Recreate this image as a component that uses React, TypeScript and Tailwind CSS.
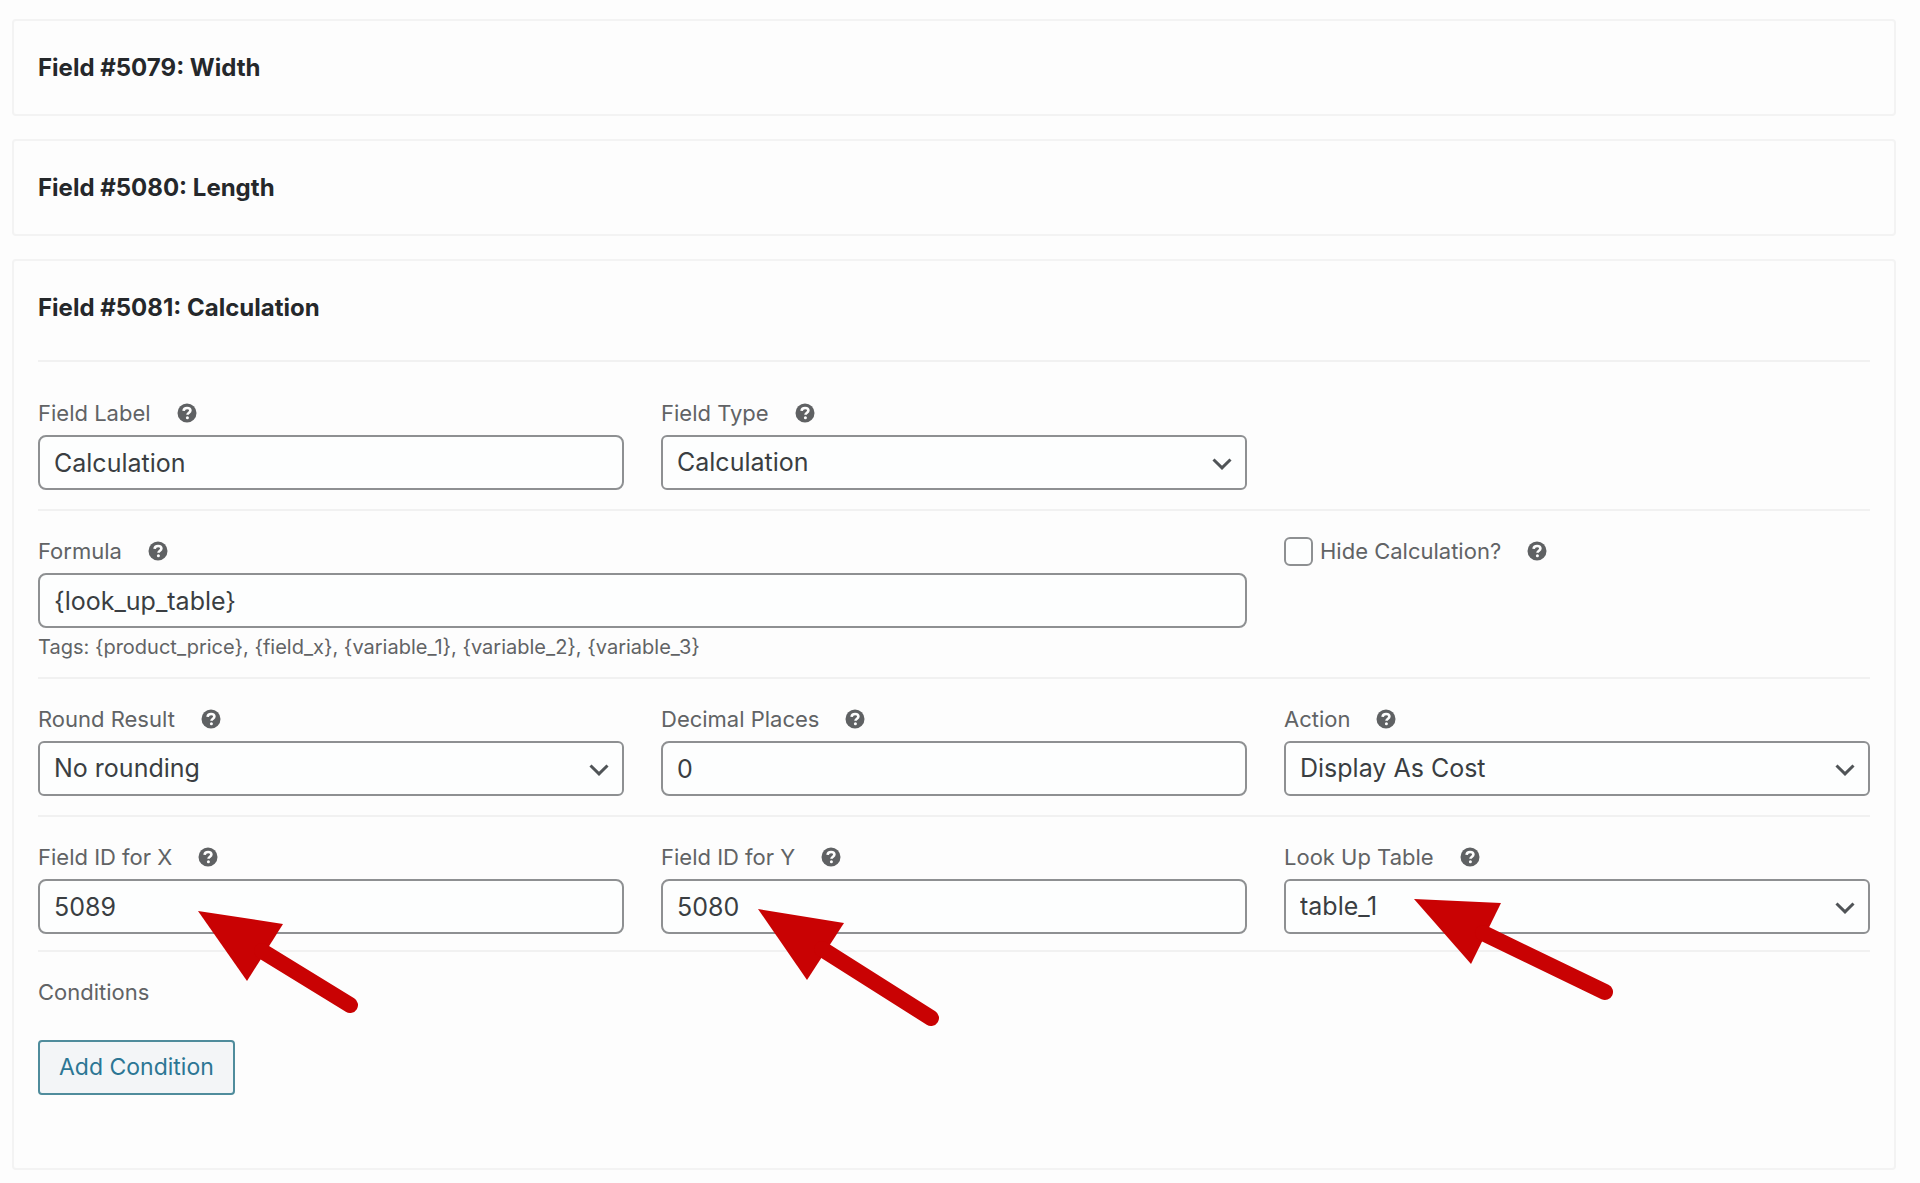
import React, { useId, useState } from "react";

const controlClass =
  "block h-[55px] w-full appearance-none border-2 border-[#8e9092] bg-[#fdfefe] px-3.5 text-[25px] text-[#3a3e42] outline-none";

function HelpIcon() {
  return (
    <svg viewBox="0 0 20 20" className="ml-[26px] size-5 shrink-0" aria-hidden="true">
      <circle cx="10" cy="10" r="9.5" fill="#5f6163" />
      <path
        d="M6.600 7.900C6.700 6 8.100 5 10.100 5c2 0 3.300 1 3.300 2.600 0 2.200-2.900 2-2.900 4.200"
        fill="none"
        stroke="#fdfdfd"
        strokeWidth="2.600"
      />
      <circle cx="10.400" cy="14.800" r="1.500" fill="#fdfdfd" />
    </svg>
  );
}

function FieldLabel({ htmlFor, children }: { htmlFor: string; children: React.ReactNode }) {
  return (
    <div className="mb-2 flex h-7 items-center">
      <label htmlFor={htmlFor} className="text-[22px] leading-7 text-[#616365]">
        {children}
      </label>
      <HelpIcon />
    </div>
  );
}

function TextField({
  label,
  initial,
  children,
}: {
  label: string;
  initial: string;
  children?: React.ReactNode;
}) {
  const id = useId();
  const [value, setValue] = useState(initial);
  return (
    <div>
      <FieldLabel htmlFor={id}>{label}</FieldLabel>
      <div className="relative">
        <input
          id={id}
          type="text"
          value={value}
          onChange={(e) => setValue(e.target.value)}
          className={`${controlClass} rounded-lg`}
        />
        {children}
      </div>
    </div>
  );
}

function SelectField({
  label,
  value,
  children,
}: {
  label: string;
  value: string;
  children?: React.ReactNode;
}) {
  const id = useId();
  return (
    <div>
      <FieldLabel htmlFor={id}>{label}</FieldLabel>
      <div className="relative">
        <select id={id} defaultValue={value} className={`${controlClass} rounded-md`}>
          <option value={value}>{value}</option>
        </select>
        <svg
          viewBox="0 0 20 12"
          className="pointer-events-none absolute top-[23px] right-[15px] h-3 w-5"
          aria-hidden="true"
        >
          <path d="M1.500 1.500 10 9.800l8.500-8.300" fill="none" stroke="#505457" strokeWidth="3" />
        </svg>
        {children}
      </div>
    </div>
  );
}

function Card({ title, children }: { title: string; children?: React.ReactNode }) {
  return (
    <section className="rounded border-2 border-[#f3f3f3] px-6">
      <h3 className="py-8 text-2xl leading-[29px] font-bold text-[#25282b]">{title}</h3>
      {children}
    </section>
  );
}

function Row({ className, children }: { className: string; children: React.ReactNode }) {
  return (
    <div className={`grid grid-cols-3 gap-x-[37px] border-b-2 border-[#f1f1f1] ${className}`}>
      {children}
    </div>
  );
}

export default function App() {
  return (
    <main className="flex min-h-screen flex-col gap-[23px] bg-[#fdfdfd] pt-[19px] pr-6 pb-3 pl-3 font-['Inter',sans-serif]">
      <Card title="Field #5079: Width" />
      <Card title="Field #5080: Length" />
      <Card title="Field #5081: Calculation">
        <div className="mt-1.5 border-t-2 border-[#f1f1f1] pb-[73px]">
          <Row className="pt-[37px] pb-[19px]">
            <TextField label="Field Label" initial="Calculation" />
            <SelectField label="Field Type" value="Calculation" />
          </Row>

          <Row className="pt-[26px] pb-4">
            <div className="col-span-2">
              <TextField label="Formula" initial="{look_up_table}" />
              <p className="mt-[5px] text-[20px] leading-7 text-[#616365]">
                Tags: {"{product_price}, {field_x}, {variable_1}, {variable_2}, {variable_3}"}
              </p>
            </div>
            <div className="flex h-7 items-center">
              <input
                id="hide-calculation"
                type="checkbox"
                className="size-[29px] shrink-0 appearance-none rounded-md border-2 border-[#8e9092] bg-[#fdfefe] checked:bg-[#2c7694]"
              />
              <label
                htmlFor="hide-calculation"
                className="ml-[7px] text-[22px] leading-7 text-[#616365]"
              >
                Hide Calculation?
              </label>
              <HelpIcon />
            </div>
          </Row>

          <Row className="pt-[26px] pb-[19px]">
            <SelectField label="Round Result" value="No rounding" />
            <TextField label="Decimal Places" initial="0" />
            <SelectField label="Action" value="Display As Cost" />
          </Row>

          <Row className="pt-[26px] pb-4">
            <TextField label="Field ID for X" initial="5089">
              <svg
                viewBox="198 911 162 104"
                className="pointer-events-none absolute top-8 left-40 z-10 h-[104px] w-[162px]"
                aria-hidden="true"
              >
                <path d="M198 911 283 924 247 981Z" fill="#c90203" />
                <path d="M262 951 350 1005" stroke="#c90203" strokeWidth="16" strokeLinecap="round" />
              </svg>
            </TextField>
            <TextField label="Field ID for Y" initial="5080">
              <svg
                viewBox="758 909 182 118"
                className="pointer-events-none absolute top-[30px] left-[97px] z-10 h-[118px] w-[182px]"
                aria-hidden="true"
              >
                <path d="M758 909 844 923 807 980Z" fill="#c90203" />
                <path d="M822 949 931 1018" stroke="#c90203" strokeWidth="16" strokeLinecap="round" />
              </svg>
            </TextField>
            <SelectField label="Look Up Table" value="table_1">
              <svg
                viewBox="1414 899 200 102"
                className="pointer-events-none absolute top-5 left-[130px] z-10 h-[102px] w-[200px]"
                aria-hidden="true"
              >
                <path d="M1414 899 1501 903 1471 964Z" fill="#c90203" />
                <path d="M1483 933 1605 992" stroke="#c90203" strokeWidth="16" strokeLinecap="round" />
              </svg>
            </SelectField>
          </Row>

          <h4 className="pt-[26px] text-[22px] leading-7 text-[#616365]">Conditions</h4>
          <button
            type="button"
            className="mt-[34px] h-[55px] rounded border-2 border-[#4f8c9c] bg-[#f3f5f7] px-[19px] text-[23px] text-[#2c7694]"
          >
            Add Condition
          </button>
        </div>
      </Card>
    </main>
  );
}
